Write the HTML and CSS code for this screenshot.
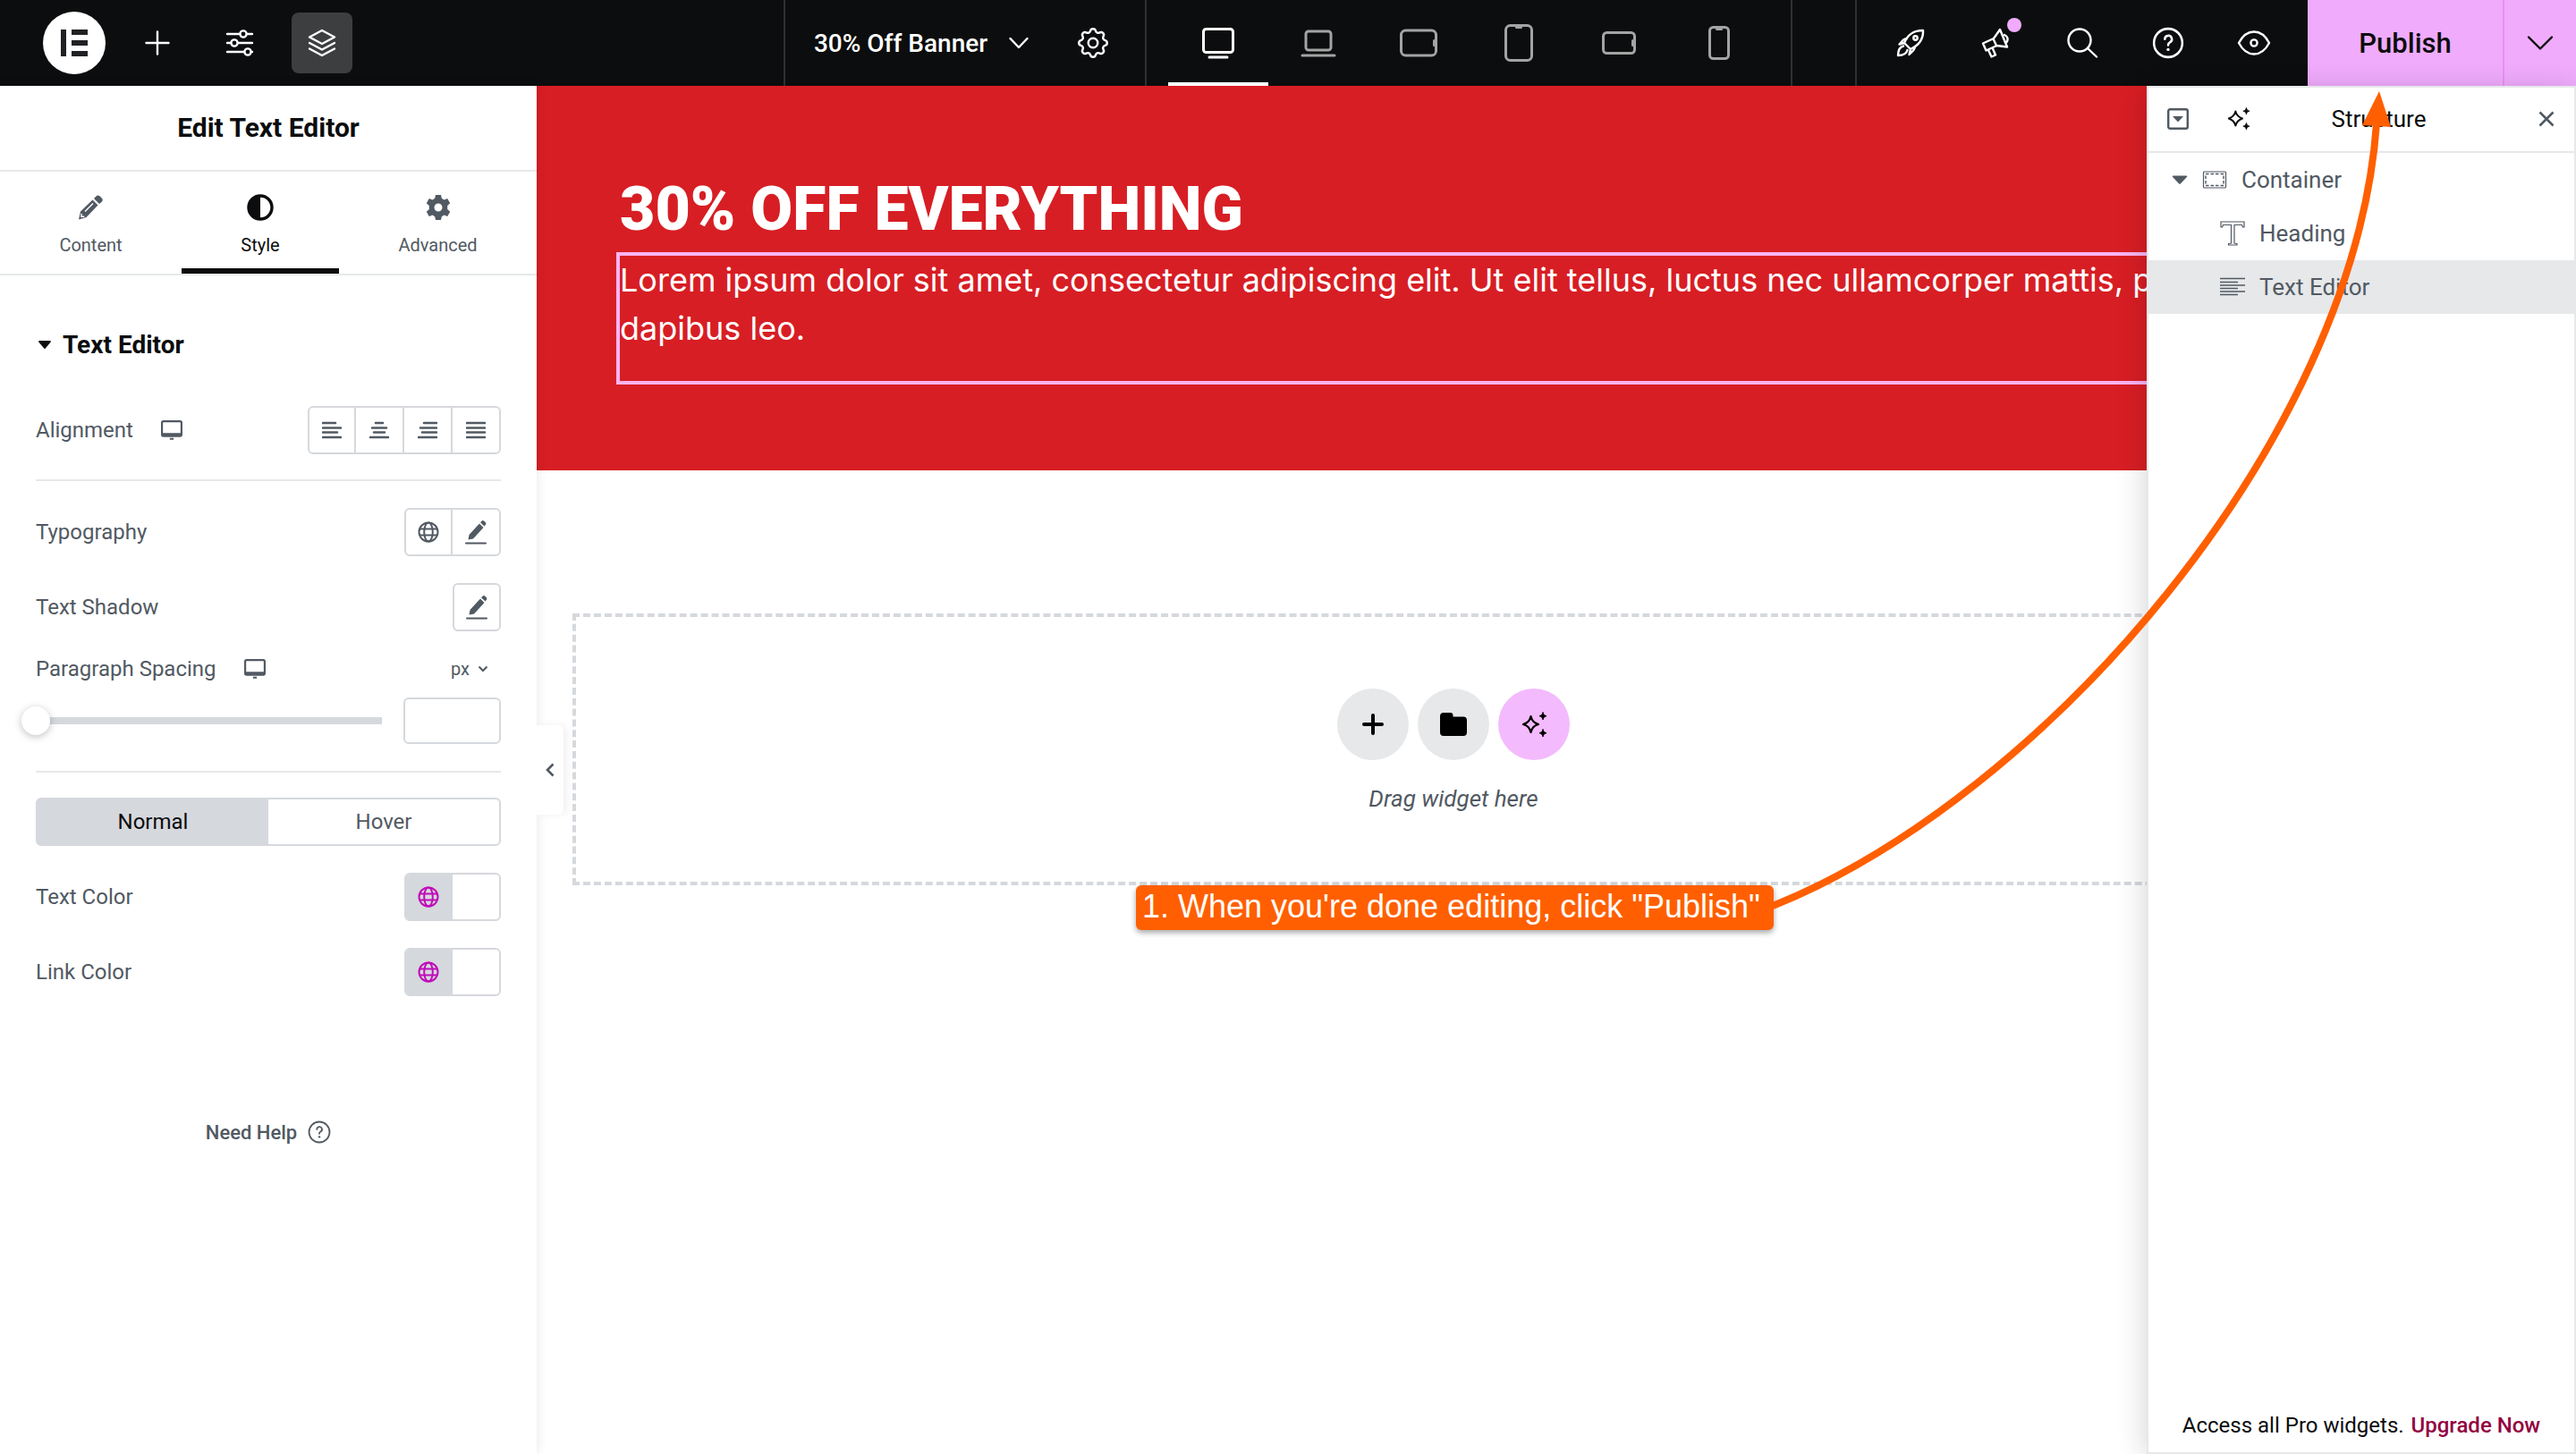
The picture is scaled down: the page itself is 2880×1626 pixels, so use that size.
FILE: index.html
```html
<!DOCTYPE html>
<html lang="en">
<head>
<meta charset="utf-8">
<title>30% Off Banner</title>
<link rel="stylesheet" href="styles.css">
</head>
<body>
<svg class="sprite" aria-hidden="true">
  <symbol id="i-pen" viewBox="0 0 24 28"><path d="M16 4.500 20.500 9 9 21.500 3.500 22.500 4.500 17z"/><path d="M17 3.200l1.500-1.500a2 2 0 0 1 2.800 0l1.400 1.400a2 2 0 0 1 0 2.800L21.500 7.500z"/><path d="M1 26.500h22" stroke="currentColor" stroke-width="2" stroke-linecap="round"/></symbol>
  <symbol id="i-globe" viewBox="0 0 24 24"><g fill="none" stroke="currentColor" stroke-width="2"><circle cx="12" cy="12" r="10.500"/><ellipse cx="12" cy="12" rx="4.800" ry="10.500"/><path d="M2.500 8.500h19M2.500 15.500h19" stroke-width="1.800"/></g></symbol>
  <symbol id="i-screen" viewBox="0 0 22 20"><path d="M2.500 1h17A1.500 1.500 0 0 1 21 2.500v12a1.500 1.500 0 0 1-1.500 1.500h-17A1.500 1.500 0 0 1 1 14.500v-12A1.500 1.500 0 0 1 2.500 1z" fill="none" stroke="currentColor" stroke-width="2"/><path d="M1 13h20v3H1zM9 18h4v1.800H9z"/></symbol>
  <symbol id="i-sparkle" viewBox="0 0 28 28"><path d="M10.500 5c1.300 5.200 3.300 7.200 8.500 9-5.200 1.800-7.200 3.800-8.500 9-1.300-5.200-3.300-7.200-8.500-9 5.200-1.800 7.200-3.800 8.500-9z" fill="none" stroke="currentColor" stroke-width="2.200" stroke-linejoin="round"/><path d="M24 .5c.7 2.800 1.300 3.400 4 4.200-2.700.8-3.300 1.500-4 4.200-.7-2.700-1.300-3.400-4-4.200 2.700-.8 3.300-1.400 4-4.200zM24 19.500c.7 2.800 1.300 3.400 4 4.200-2.700.8-3.300 1.500-4 4.200-.7-2.700-1.300-3.400-4-4.200 2.700-.8 3.300-1.400 4-4.200z" stroke="currentColor" stroke-width="1" stroke-linejoin="round"/></symbol>
  <symbol id="i-help" viewBox="0 0 34 34"><g fill="none" stroke="currentColor" stroke-width="2.400" stroke-linecap="round"><circle cx="17" cy="17" r="15"/><path d="M13.500 13a3.700 3.700 0 1 1 5.400 3.300c-1.400.7-1.900 1.400-1.900 3"/></g><circle cx="17" cy="24" r="1.600"/></symbol>
</svg>

<header class="topbar">
  <div class="bar-left">
    <button class="logo" aria-label="Menu"><svg width="30" height="30" viewBox="0 0 30 30"><path d="M0 0h6v30H0zM12 0h18v6H12zM12 12h18v6H12zM12 24h18v6H12z"/></svg></button>
    <button class="tool" aria-label="Add element"><svg width="28" height="28" viewBox="0 0 28 28" class="line"><path d="M14 1.500v25M1.500 14h25"/></svg></button>
    <button class="tool" aria-label="Site settings"><svg width="32" height="32" viewBox="0 0 32 32" class="line"><path d="M2 6h14M24 6h6M2 16h4M14 16h16M2 26h19M29 26h1"/><circle cx="20" cy="6" r="3.600"/><circle cx="10" cy="16" r="3.600"/><circle cx="25" cy="26" r="3.600"/></svg></button>
    <button class="tool tool-on" aria-label="Structure"><svg width="32" height="32" viewBox="0 0 32 32" class="line"><path d="M16 2 30 9.500 16 17 2 9.500zM2 16l14 7.500L30 16M2 22.500 16 30l14-7.500"/></svg></button>
  </div>
  <div class="bar-doc">
    <button class="doc-name">30% Off Banner <svg width="22" height="14" viewBox="0 0 22 14" class="line"><path d="M1.500 2 11 12l9.500-10"/></svg></button>
    <button class="tool" aria-label="Page settings"><svg class="outline" width="42" height="42" viewBox="0 0 24 24" stroke="currentColor" stroke-width="1.400" stroke-linejoin="round"><path d="M10.325 4.317c.426-1.756 2.924-1.756 3.350 0a1.724 1.724 0 0 0 2.573 1.066c1.543-.94 3.310.826 2.370 2.370a1.724 1.724 0 0 0 1.065 2.572c1.756.426 1.756 2.924 0 3.350a1.724 1.724 0 0 0-1.066 2.573c.94 1.543-.826 3.310-2.370 2.370a1.724 1.724 0 0 0-2.572 1.065c-.426 1.756-2.924 1.756-3.350 0a1.724 1.724 0 0 0-2.573-1.066c-1.543.94-3.310-.826-2.370-2.370a1.724 1.724 0 0 0-1.065-2.572c-1.756-.426-1.756-2.924 0-3.350a1.724 1.724 0 0 0 1.066-2.573c-.94-1.543.826-3.310 2.370-2.370 1 .608 2.296.070 2.572-1.065z"/><circle cx="12" cy="12" r="3"/></svg></button>
  </div>
  <div class="bar-devices">
    <button class="device device-on" aria-label="Desktop"><svg width="38" height="38" viewBox="0 0 38 38" class="dev"><rect x="2.500" y="3.500" width="33" height="26" rx="3"/><path d="M9 35h20"/></svg></button>
    <button class="device" aria-label="Laptop"><svg width="40" height="38" viewBox="0 0 40 38" class="dev"><rect x="6" y="6" width="28" height="21" rx="3"/><path d="M2 33h36"/></svg></button>
    <button class="device" aria-label="Tablet landscape"><svg width="42" height="38" viewBox="0 0 42 38" class="dev"><rect x="1.500" y="5" width="39" height="28" rx="5"/><path d="M38.500 16.500v5"/></svg></button>
    <button class="device" aria-label="Tablet portrait"><svg width="34" height="44" viewBox="0 0 34 44" class="dev"><rect x="2.500" y="2.500" width="29" height="39" rx="5"/><path d="M14.500 4.500h5"/></svg></button>
    <button class="device" aria-label="Mobile landscape"><svg width="40" height="30" viewBox="0 0 40 30" class="dev"><rect x="2.500" y="3.500" width="35" height="23" rx="4"/><path d="M35.500 12.500v5"/></svg></button>
    <button class="device" aria-label="Mobile portrait"><svg width="30" height="40" viewBox="0 0 30 40" class="dev"><rect x="4.500" y="2.500" width="21" height="35" rx="4"/><path d="M12.500 4.500h5"/></svg></button>
  </div>
  <div class="bar-right">
    <div class="tools">
      <button class="tool" aria-label="Checklist"><svg width="34" height="34" viewBox="0 0 34 34" class="line"><path d="M10 17C14 7.500 20 3 31 3c.5 10-4.500 16.500-14 21zM10 17l-5.500 1.500L9 13.500c1.200-1.200 2.500-1.500 4-1.300M17 24l-1.500 6 5-5c1.200-1.200 1.500-2.500 1.300-4M9 20.500c-4 1-6 4.500-6 10.500 6 0 9.500-2 10.500-6"/><circle cx="22.500" cy="11.500" r="2.200"/></svg></button>
      <button class="tool" aria-label="What's new"><svg width="34" height="34" viewBox="0 0 34 34" class="line"><path d="M2 17.500 14 12 21 2l8 19.500-11.500-1.500L5.500 25.500zM13.500 12.500l3.500 7.500M8 25l3.500 7.500 4.500-2-3.500-8M26 8c3.500 1.500 4.500 5 2.500 8"/></svg><span class="dot"></span></button>
      <button class="tool" aria-label="Finder"><svg width="36" height="34" viewBox="0 0 36 34" class="line"><circle cx="15" cy="14" r="12.500"/><path d="m24 23 10 9.500"/></svg></button>
      <button class="tool" aria-label="Help"><svg width="36" height="36"><use href="#i-help"/></svg></button>
      <button class="tool" aria-label="Preview"><svg width="38" height="30" viewBox="0 0 38 30" class="line"><path d="M2 15C6.500 6.500 12 2.500 19 2.500S31.500 6.500 36 15c-4.500 8.500-10 12.500-17 12.500S6.500 23.500 2 15z"/><circle cx="19" cy="15" r="3.600"/></svg></button>
    </div>
    <button class="publish">Publish</button>
    <button class="publish-more" aria-label="Save options"><svg width="30" height="18" viewBox="0 0 30 18" class="line"><path d="M2 2.500 15 15.500 28 2.500"/></svg></button>
  </div>
</header>

<div class="workspace">
  <aside class="panel">
    <h1 class="panel-title">Edit Text Editor</h1>
    <nav class="tabs">
      <button class="tab"><svg width="30" height="30" viewBox="0 0 30 30"><path d="M17.500 6.500 23.500 12.500 10.500 26 2 28.500 4 19.500z"/><path d="M19 5l2.500-2.500a3 3 0 0 1 4.200 0l2 2a3 3 0 0 1 0 4.200L25 11z"/><path d="M9 19.500 18 10.500" stroke="#fff" stroke-width="1.400"/><path d="M5 22v3.200h3.300" fill="none" stroke="#fff" stroke-width="1.400"/></svg>Content</button>
      <button class="tab tab-on"><svg width="30" height="30" viewBox="0 0 30 30"><circle cx="15" cy="15" r="13" fill="none" stroke="currentColor" stroke-width="3.400"/><path d="M15 2a13 13 0 0 0 0 26z"/></svg>Style</button>
      <button class="tab"><svg width="30" height="30" viewBox="0 0 30 30"><path fill-rule="evenodd" d="M12 1h6l.8 3.800 2.700 1.600 3.700-1.300 3 5.200-3 2.600v4.200l3 2.600-3 5.200-3.700-1.300-2.700 1.600L18 29h-6l-.8-3.800-2.700-1.600-3.700 1.300-3-5.200 3-2.600v-4.200l-3-2.600 3-5.200 3.700 1.300 2.700-1.600zM15 10.500a4.500 4.500 0 1 0 0 9 4.500 4.500 0 0 0 0-9z"/></svg>Advanced</button>
    </nav>

    <div class="controls">
      <button class="section-toggle"><svg width="14" height="9" viewBox="0 0 14 9"><path d="M1 0h12a1 1 0 0 1 .7 1.600L7.800 8.600a1 1 0 0 1-1.600 0L.3 1.600A1 1 0 0 1 1 0z"/></svg>Text Editor</button>

      <div class="row ruled">
        <span class="name">Alignment</span>
        <svg class="screen" width="24" height="22"><use href="#i-screen"/></svg>
        <div class="group">
          <button aria-label="Left"><svg width="22" height="20" viewBox="0 0 22 20" class="bars"><path d="M1 2h14M1 7.500h20M1 12.500h16M1 18h20"/></svg></button>
          <button aria-label="Center"><svg width="22" height="20" viewBox="0 0 22 20" class="bars"><path d="M7 2h8M3 7.500h16M5 12.500h12M1 18h20"/></svg></button>
          <button aria-label="Right"><svg width="22" height="20" viewBox="0 0 22 20" class="bars"><path d="M7 2h14M3 7.500h18M5 12.500h16M1 18h20"/></svg></button>
          <button aria-label="Justified"><svg width="22" height="20" viewBox="0 0 22 20" class="bars"><path d="M1 2h20M1 7.500h20M1 12.500h20M1 18h20"/></svg></button>
        </div>
      </div>

      <div class="row">
        <span class="name">Typography</span>
        <div class="group">
          <button aria-label="Global fonts"><svg width="24" height="24"><use href="#i-globe"/></svg></button>
          <button aria-label="Edit typography"><svg width="24" height="28"><use href="#i-pen"/></svg></button>
        </div>
      </div>

      <div class="row">
        <span class="name">Text Shadow</span>
        <div class="group">
          <button aria-label="Edit text shadow"><svg width="24" height="28"><use href="#i-pen"/></svg></button>
        </div>
      </div>

      <div class="spacing">
        <div class="spacing-head">
          <label class="name" for="spacing">Paragraph Spacing</label>
          <svg class="screen" width="24" height="22"><use href="#i-screen"/></svg>
          <select class="unit" aria-label="Unit"><option>px</option><option>%</option></select>
          <svg class="unit-arrow" width="12" height="8" viewBox="0 0 12 8"><path d="m1.500 1.500 4.500 4.500 4.500-4.500" fill="none" stroke="currentColor" stroke-width="2"/></svg>
        </div>
        <div class="spacing-body">
          <input class="slider" type="range" min="0" max="100" value="0" aria-label="Paragraph spacing slider">
          <input class="amount" id="spacing" type="text">
        </div>
      </div>

      <div class="switch">
        <button class="switch-on">Normal</button>
        <button>Hover</button>
      </div>

      <div class="row">
        <span class="name">Text Color</span>
        <div class="group">
          <button class="linked" aria-label="Global text color"><svg width="24" height="24"><use href="#i-globe"/></svg></button>
          <button aria-label="Pick text color"></button>
        </div>
      </div>

      <div class="row">
        <span class="name">Link Color</span>
        <div class="group">
          <button class="linked" aria-label="Global link color"><svg width="24" height="24"><use href="#i-globe"/></svg></button>
          <button aria-label="Pick link color"></button>
        </div>
      </div>

      <a class="help" href="#help">Need Help <svg width="26" height="26"><use href="#i-help"/></svg></a>
    </div>
    <button class="collapse" aria-label="Hide panel"><svg width="12" height="16" viewBox="0 0 12 16"><path d="M9.500 1.500 3 8l6.500 6.500" fill="none" stroke="currentColor" stroke-width="2.600"/></svg></button>
  </aside>

  <main class="canvas">
    <section class="banner">
      <h2>30% OFF EVERYTHING</h2>
      <div class="banner-text">
        <p>Lorem ipsum dolor sit amet, consectetur adipiscing elit. Ut elit tellus, luctus nec ullamcorper mattis, pulvinar dapibus leo.</p>
      </div>
    </section>
    <div class="stage">
      <section class="dropzone">
        <div class="drop-actions">
          <button aria-label="Add container"><svg width="24" height="24" viewBox="0 0 24 24"><path d="M12 2v20M2 12h20" stroke="currentColor" stroke-width="4" stroke-linecap="round"/></svg></button>
          <button aria-label="Add template"><svg width="30" height="26" viewBox="0 0 30 26"><path d="M4 0h7.500a3 3 0 0 1 3 3v1.500H26a4 4 0 0 1 4 4V22a4 4 0 0 1-4 4H4a4 4 0 0 1-4-4V4a4 4 0 0 1 4-4z"/></svg></button>
          <button class="ai" aria-label="Build with AI"><svg width="28" height="28"><use href="#i-sparkle"/></svg></button>
        </div>
        <p>Drag widget here</p>
      </section>
    </div>
  </main>

  <aside class="structure">
    <header class="structure-head">
      <button aria-label="Collapse all"><svg width="24" height="24" viewBox="0 0 24 24"><rect x="1.200" y="1.200" width="21.600" height="21.600" rx="2" fill="none" stroke="currentColor" stroke-width="2.400"/><path d="M6 9h12l-6 6.500z"/></svg></button>
      <button class="ink" aria-label="AI"><svg width="25" height="25"><use href="#i-sparkle"/></svg></button>
      <h2>Structure</h2>
      <button aria-label="Close"><svg width="18" height="18" viewBox="0 0 18 18"><path d="m1.500 1.500 15 15M16.500 1.500l-15 15" stroke="currentColor" stroke-width="2.600"/></svg></button>
    </header>
    <ul class="tree">
      <li class="node root"><svg class="caret" width="18" height="10" viewBox="0 0 18 10"><path d="M1.500.5h15a.8.800 0 0 1 .6 1.300l-7.300 7.600a1.100 1.100 0 0 1-1.600 0L.9 1.800A.8.800 0 0 1 1.500.5z"/></svg><svg class="outline" width="28" height="20" viewBox="0 0 28 20" stroke="currentColor"><rect x="1.500" y="1" width="25" height="18" rx="1" stroke-width="1.200"/><rect x="4" y="3.500" width="20" height="13" stroke-width="1.400" stroke-dasharray="3.500 2"/></svg><span>Container</span></li>
      <li class="node"><svg class="outline" width="28" height="28" viewBox="0 0 28 28" stroke="currentColor" stroke-width="1.200"><path d="M1 1h26v6h-1.500l-1-2.500H16V25l3 .5V27H9.500v-1.500l3-.5V4.500H3.500L2.500 7H1z"/></svg><span>Heading</span></li>
      <li class="node node-on"><svg width="28" height="22" viewBox="0 0 28 22" stroke="currentColor" stroke-width="1.500"><path d="M0 1.500h28M0 5.500h20M0 9h28M0 12.500h20M0 16h28M0 19.500h20"/></svg><span>Text Editor</span></li>
    </ul>
    <p class="upsell">Access all Pro widgets. <a href="#upgrade">Upgrade Now</a></p>
  </aside>

  <div class="callout">1. When you're done editing, click "Publish"</div>
  <svg class="arrow" width="720" height="940" viewBox="0 0 720 940" aria-hidden="true"><path d="M21 917C321 797 671 398 696 42" fill="none" stroke="#ff5f00" stroke-width="8"/><path d="M699 6 680 44l32 2z" fill="#ff5f00"/></svg>
</div>
</body>
</html>
```
FILE: styles.css
```css
* { box-sizing: border-box; }

body {
  margin: 0;
  min-height: 100vh;
  display: flex;
  flex-direction: column;
  font-family: Roboto, "Liberation Sans", sans-serif;
  font-size: 24px;
  color: #515962;
  background: #fff;
}

h1, h2, p, ul { margin: 0; padding: 0; font-weight: 400; }

button, select, input {
  margin: 0;
  padding: 0;
  border: 0;
  background: none;
  color: inherit;
  font: inherit;
}

svg { display: block; flex: none; fill: currentColor; }
.sprite { position: absolute; width: 0; height: 0; }
.outline { fill: none; }
.line { fill: none; stroke: currentColor; stroke-width: 2.400; stroke-linecap: round; stroke-linejoin: round; }
.bars { fill: none; stroke: currentColor; stroke-width: 2.600; stroke-linecap: round; }
.dev { fill: none; stroke: currentColor; stroke-width: 3; stroke-linecap: round; }

/* Top bar */
.topbar {
  display: flex;
  height: 96px;
  background: #0c0d0e;
  color: #fff;
}

.bar-left {
  flex: 1 1 0;
  display: flex;
  align-items: center;
  gap: 24px;
}

.logo, .tool, .drop-actions button {
  display: flex;
  align-items: center;
  justify-content: center;
}

.logo {
  width: 70px;
  height: 70px;
  margin-left: 48px;
  border-radius: 50%;
  background: #fff;
  color: #1f2124;
}

.tool {
  position: relative;
  width: 68px;
  height: 68px;
  border-radius: 8px;
}

.tool-on { background: #3d3e3f; }

.bar-doc {
  display: flex;
  align-items: center;
  gap: 38px;
  padding: 0 24px 0 32px;
  border-left: 2px solid #2f3031;
  border-right: 2px solid #2f3031;
}

.doc-name {
  display: flex;
  align-items: center;
  gap: 24px;
  font-size: 28px;
  font-weight: 500;
}

.bar-devices { display: flex; padding: 0 24px; border-right: 2px solid #2f3031; }

.device {
  display: flex;
  align-items: center;
  justify-content: center;
  width: 112px;
  border-top: 4px solid transparent;
  border-bottom: 4px solid transparent;
  color: #a3a4a4;
}

.device-on { border-bottom-color: #fff; color: #fff; }

.bar-right { flex: 1 1 0; display: flex; justify-content: flex-end; }

.tools {
  display: flex;
  align-items: center;
  gap: 28px;
  padding: 0 26px;
  border-left: 2px solid #2f3031;
}

.dot {
  position: absolute;
  top: 6px;
  right: 6px;
  width: 16px;
  height: 16px;
  border-radius: 50%;
  background: #f0abfc;
}

.publish, .publish-more { background: #f0abfc; color: #0c0d0e; }
.publish { width: 218px; font-size: 31px; font-weight: 500; }
.publish-more {
  display: flex;
  align-items: center;
  justify-content: center;
  width: 82px;
  border-left: 2px solid #eb8efb;
}

/* Left panel */
.workspace { position: relative; flex: 1; display: flex; }

.panel {
  position: relative;
  z-index: 1;
  width: 600px;
  flex: none;
  background: #fff;
  box-shadow: 0 0 12px rgba(0, 0, 0, .1);
}

.panel-title {
  height: 96px;
  border-bottom: 2px solid #e6e8ea;
  line-height: 94px;
  text-align: center;
  font-size: 30px;
  font-weight: 700;
  color: #0c0d0e;
}

.tabs { display: flex; height: 116px; border-bottom: 2px solid #e6e8ea; }

.tab {
  flex: 1 1 auto;
  display: flex;
  flex-direction: column;
  align-items: center;
  gap: 15px;
  padding-top: 25px;
  border-bottom: 6px solid transparent;
  font-size: 20px;
}

.tab-on { border-bottom-color: #0c0d0e; color: #0c0d0e; }

.controls {
  display: flex;
  flex-direction: column;
  gap: 30px;
  padding: 60px 40px;
}

.section-toggle {
  display: flex;
  align-items: center;
  gap: 13px;
  height: 34px;
  margin-bottom: 22px;
  padding-left: 3px;
  font-size: 28px;
  font-weight: 700;
  color: #0c0d0e;
}

.row { display: flex; align-items: center; }
.ruled { padding-bottom: 28px; border-bottom: 2px solid #e6e8ea; }
.screen { margin-left: 31px; }

.group {
  display: flex;
  margin-left: auto;
  height: 54px;
  border: 2px solid #d5d8dc;
  border-radius: 6px;
  overflow: hidden;
}

.group button {
  display: flex;
  align-items: center;
  justify-content: center;
  width: 50px;
}

.group button + button { width: 54px; border-left: 2px solid #d5d8dc; }
.group .linked { background: #d5d8dc; color: #c00bb9; }

.spacing {
  display: flex;
  flex-direction: column;
  gap: 20px;
  margin-bottom: -2px;
  padding-bottom: 30px;
  border-bottom: 2px solid #e6e8ea;
}

.spacing-head { display: flex; align-items: center; height: 24px; padding-right: 14px; }
.unit { margin-left: auto; margin-right: 8px; appearance: none; font-size: 20px; }

.spacing-body { display: flex; align-items: center; gap: 24px; }

.slider {
  appearance: none;
  flex: 1;
  min-width: 0;
  height: 32px;
  margin-left: -16px;
  background: linear-gradient(#d5d8dc, #d5d8dc) 16px 50% / 100% 8px no-repeat;
  border-radius: 4px;
}

.slider::-webkit-slider-thumb {
  appearance: none;
  width: 32px;
  height: 32px;
  border-radius: 50%;
  background: #fff;
  box-shadow: 0 2px 8px rgba(0, 0, 0, .25);
}

.amount {
  width: 109px;
  height: 52px;
  padding: 0 12px;
  border: 2px solid #d5d8dc;
  border-radius: 6px;
}

.switch {
  display: flex;
  height: 54px;
  border: 2px solid #d5d8dc;
  border-radius: 6px;
}

.switch button { flex: 1; }
.switch .switch-on { background: #d5d8dc; color: #0c0d0e; }

.help {
  display: flex;
  align-items: center;
  justify-content: center;
  gap: 12px;
  height: 32px;
  margin-top: 106px;
  font-size: 22px;
  font-weight: 500;
  color: inherit;
  text-decoration: none;
}

.collapse {
  position: absolute;
  top: 715px;
  left: 100%;
  display: flex;
  align-items: center;
  justify-content: center;
  width: 30px;
  height: 100px;
  border-radius: 0 6px 6px 0;
  background: #fff;
  box-shadow: 4px 0 8px rgba(0, 0, 0, .06);
}

/* Canvas */
.canvas { flex: 1; min-width: 0; }

.banner {
  padding: 102px 325px 96px 89px;
  background: #d71e24;
  color: #fff;
}

.banner h2 {
  margin-bottom: 12px;
  padding-left: 4px;
  line-height: 72px;
  font-size: 68px;
  font-weight: 900;
}

.banner-text { padding-bottom: 32px; border: 4px solid #f9b4f3; }
.banner-text p { font: 36px/54px Inter, sans-serif; }

.stage { padding: 160px 270px 0 40px; }

.dropzone {
  display: flex;
  flex-direction: column;
  align-items: center;
  gap: 28px;
  height: 304px;
  padding-top: 80px;
  border: 4px dashed #d5d8dc;
  font-size: 26px;
  font-style: italic;
}

.drop-actions { display: flex; gap: 10px; }

.drop-actions button {
  width: 80px;
  height: 80px;
  border-radius: 50%;
  background: #e6e8ea;
  color: #000;
}

.drop-actions .ai { background: #f3bafd; }

/* Structure panel */
.structure {
  position: absolute;
  z-index: 2;
  top: 0;
  right: 0;
  bottom: 0;
  width: 480px;
  display: flex;
  flex-direction: column;
  border: 2px solid #e6e8ea;
  background: #fff;
  box-shadow: -2px 4px 30px rgba(0, 0, 0, .16);
}

.structure-head {
  display: flex;
  align-items: center;
  height: 73px;
  padding: 0 22px 2px 21px;
  border-bottom: 2px solid #e6e8ea;
}

.structure-head .ink { margin-left: 43px; color: #0c0d0e; }

.structure-head h2 {
  flex: 1;
  padding-right: 34px;
  text-align: center;
  font-size: 26px;
  color: #0c0d0e;
}

.tree { list-style: none; font-size: 26px; }

.node {
  display: flex;
  align-items: center;
  gap: 16px;
  height: 60px;
  padding-left: 80px;
}

.root { padding-left: 26px; }
.node-on { background: #e6e8ea; }

.upsell {
  margin-top: auto;
  padding-bottom: 14px;
  line-height: 32px;
  text-align: center;
  color: #0c0d0e;
}

.upsell a { margin-left: 2px; font-weight: 500; color: #93003f; text-decoration: none; }

/* Walkthrough annotation over the editor */
.callout, .arrow { position: absolute; z-index: 3; }

.callout {
  top: 894px;
  left: 1270px;
  height: 50px;
  padding: 0 15px 0 7px;
  border-radius: 6px;
  background: #ff5f00;
  color: #fff;
  font: 36px/48px "Liberation Sans", Arial, sans-serif;
  white-space: nowrap;
  box-shadow: 0 3px 6px rgba(0, 0, 0, .35);
}

.arrow { top: 0; right: 199px; pointer-events: none; }
```
